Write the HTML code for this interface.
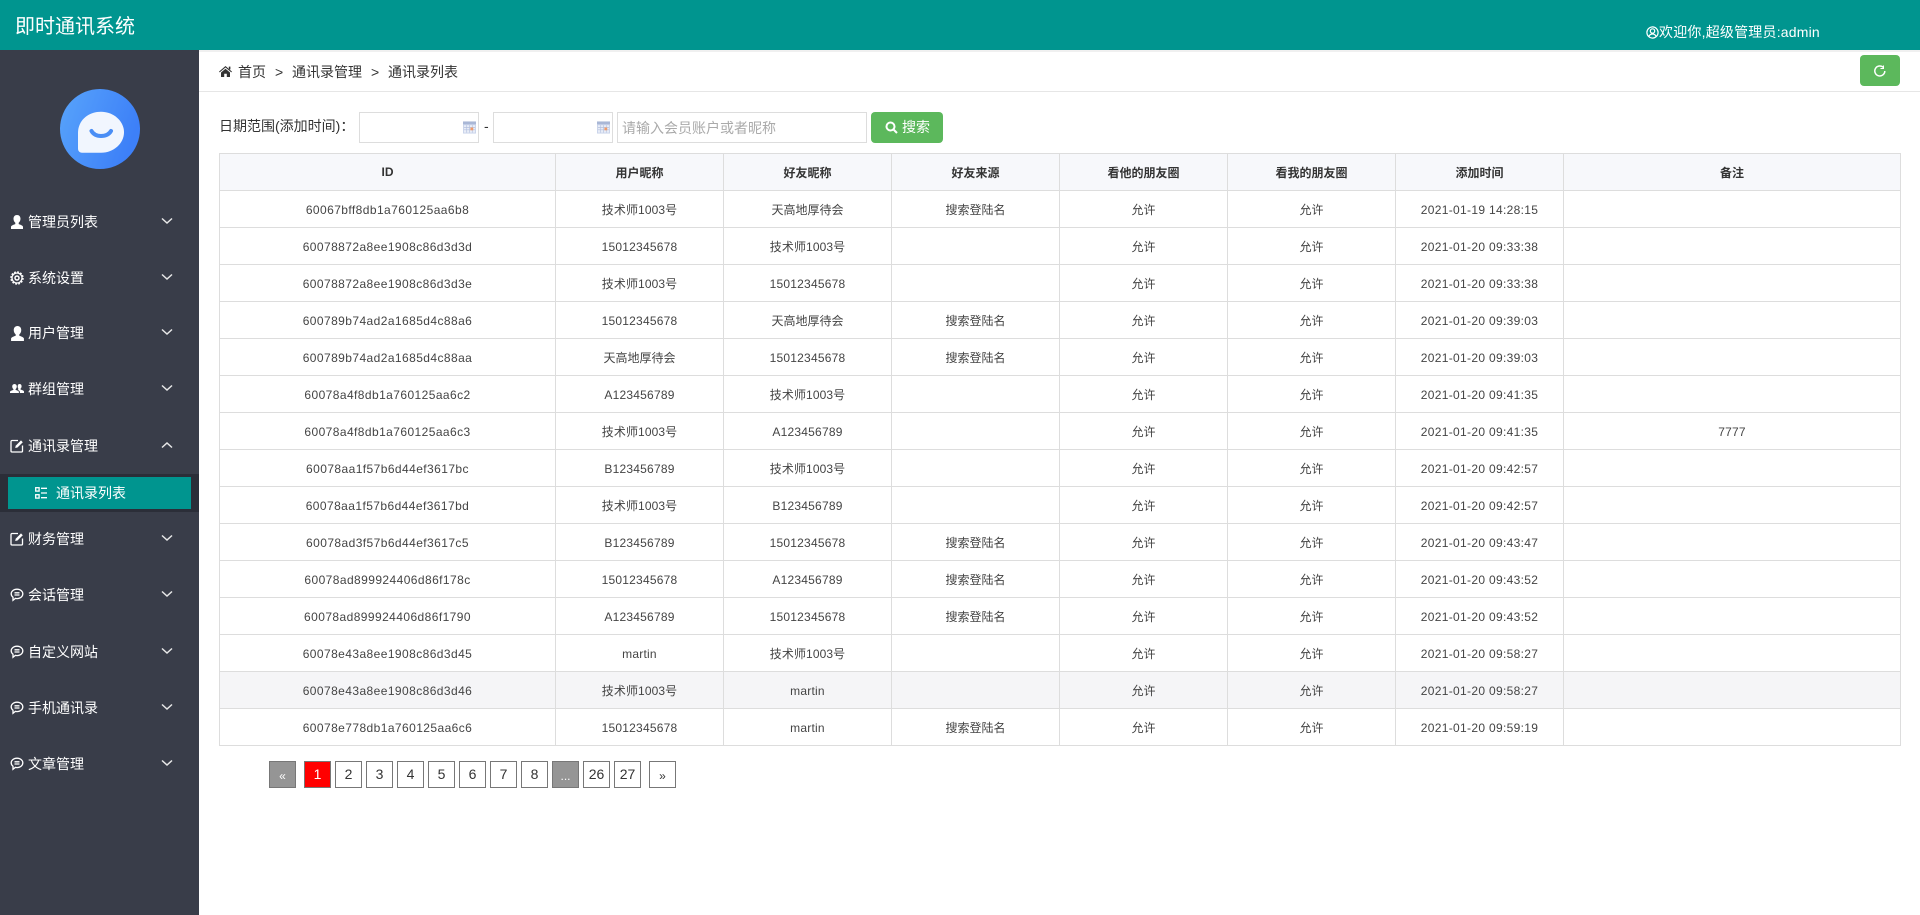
<!DOCTYPE html>
<html lang="zh-CN">
<head>
<meta charset="utf-8">
<title>即时通讯系统</title>
<style>
*{box-sizing:border-box;margin:0;padding:0}
html,body{width:1920px;height:915px;overflow:hidden;background:#fff}
body{position:relative;font-family:"Liberation Sans","Noto Sans CJK SC",sans-serif;font-size:12px;color:#333}
.a{position:absolute;white-space:nowrap}
#hd{left:0;top:0;width:1920px;height:50px;background:#00958f}
#title{left:15px;top:13px;font-size:20px;line-height:28px;color:#fff}
#wel{left:1646px;top:22px;font-size:14px;line-height:20px;color:#fff;letter-spacing:.2px}
#wel svg{vertical-align:-2px}
#gap{left:199px;top:50px;width:1721px;height:2px;background:#f0f0f0}
#sb{left:0;top:50px;width:199px;height:865px;background:#393d49}
.m{left:0;width:199px;height:20px;line-height:20px;font-size:14px;color:#fff}
.m .t{position:absolute;left:28px;top:0}
.m svg.i{position:absolute;left:10px;top:3px}
.m svg.c{position:absolute;left:161px;top:3px}
#subbg{left:0;top:474px;width:199px;height:38px;background:#2b2e38}
#sub{left:8px;top:477px;width:183px;height:32px;background:#00958f;color:#fff;font-size:14px;line-height:32px}
#sub span{position:absolute;left:48px;top:0}
#sub svg{position:absolute;left:27px;top:10px}
#bc{left:199px;top:52px;width:1721px;height:40px;border-bottom:1px solid #e6e6e6}
.bt{top:62px;font-size:14px;line-height:20px;color:#333}
#rf{left:1860px;top:55px;width:40px;height:31px;background:#5cb85c;border-radius:4px}
.lab{left:219px;top:116px;font-size:14px;line-height:20px;color:#333}
.inp{top:112px;height:31px;border:1px solid #ddd;background:#fff}
.ph{left:622px;top:118px;font-size:14px;line-height:20px;color:#aaa}
#btn{left:871px;top:112px;width:72px;height:31px;background:#5cb85c;border-radius:4px;color:#fff;font-size:14px;line-height:31px}
#btn span{position:absolute;left:31px;top:0}
#btn svg{position:absolute;left:14px;top:9px}
table{position:absolute;left:219px;top:153px;width:1681px;border-collapse:collapse;table-layout:fixed}
th,td{border:1px solid #ddd;height:37px;padding:0;text-align:center;font-size:12px;color:#444;white-space:nowrap;font-weight:normal}
th{background:#f7f8fb;font-weight:bold;color:#333}
td.n{letter-spacing:.42px;padding-top:1px}
td.d{letter-spacing:.32px;padding-top:1px}
td.s{letter-spacing:.22px;padding-top:1px}
td.x{letter-spacing:.1px}
tr.h td{background:#f5f5f7}
.p{top:761px;width:27px;height:27px;border:1px solid #777;text-align:center;font-size:14px;line-height:25px;color:#333;background:#fff}
.p.g{background:#959595;color:#fff;font-size:12px;line-height:28px}
.p.r{background:#f00;color:#fff;border-color:#777}
.p.q{font-size:12px;line-height:28px}
</style>
</head>
<body>
<div class="a" id="hd"></div>
<div class="a" id="title">即时通讯系统</div>
<div class="a" id="wel"><svg width="13" height="13" viewBox="0 0 13 13" fill="none" stroke="#fff" stroke-width="1.2"><circle cx="6.5" cy="6.5" r="5.6"/><circle cx="6.5" cy="5" r="2.2"/><path d="M2.8 10.600c.8-1.800 2.100-2.600 3.700-2.600s2.900.8 3.700 2.600"/></svg>欢迎你,超级管理员:admin</div>
<div class="a" id="gap"></div>

<div class="a" id="sb"></div>
<svg class="a" style="left:60px;top:89px" width="80" height="80" viewBox="0 0 80 80">
<defs><linearGradient id="lg" x1="0" y1="0" x2="1" y2=".35"><stop offset="0" stop-color="#58a4fb"/><stop offset="1" stop-color="#3d80f8"/></linearGradient></defs>
<circle cx="40" cy="40" r="40" fill="url(#lg)"/>
<path d="M18 44C18 31 28.500 22.700 41 22.700C53.500 22.700 64 32 64 43.200C64 54.500 53.500 63.700 41 63.700H22C19.500 63.700 18 62 18 59.500Z" fill="#f1f6fe"/>
<path d="M31.500 42c2 3.500 5.500 5 9.500 5s8-1.500 10-5" fill="none" stroke="#4a8ef5" stroke-width="4" stroke-linecap="round"/>
</svg>

<div class="a m" style="top:212px"><svg class="i" width="14" height="14" viewBox="0 0 14 14" fill="#fff"><path d="M7 0c2.300 0 3.500 1.700 3.500 3.800 0 1.700-.8 3.200-1.800 4v1.300c1.800.7 4 1.300 4.300 2.600V14H1v-2.300c.3-1.300 2.500-1.900 4.300-2.600V7.800c-1-.8-1.800-2.300-1.800-4C3.500 1.700 4.700 0 7 0z"/></svg><span class="t">管理员列表</span><svg class="c" width="12" height="12" viewBox="0 0 12 12" fill="none" stroke="#e8e8e8" stroke-width="1.500"><path d="M1 3.500l5 4.500 5-4.500"/></svg></div>

<div class="a m" style="top:268px"><svg class="i" width="14" height="14" viewBox="0 0 14 14" fill="none" stroke="#fff"><circle cx="7" cy="7" r="2" stroke-width="1.500"/><circle cx="7" cy="7" r="5" stroke-width="1.300"/><circle cx="7" cy="7" r="6" stroke-width="1.500" stroke-dasharray="1.800 1.340"/></svg><span class="t">系统设置</span><svg class="c" width="12" height="12" viewBox="0 0 12 12" fill="none" stroke="#e8e8e8" stroke-width="1.500"><path d="M1 3.500l5 4.500 5-4.500"/></svg></div>

<div class="a m" style="top:323px"><svg class="i" width="15" height="15" viewBox="0 0 14 14" fill="#fff"><path d="M7 0c2.300 0 3.500 1.700 3.500 3.800 0 1.700-.8 3.200-1.800 4v1.300c1.800.7 4 1.300 4.300 2.600V14H1v-2.300c.3-1.300 2.500-1.900 4.300-2.600V7.800c-1-.8-1.800-2.300-1.800-4C3.500 1.700 4.700 0 7 0z"/></svg><span class="t">用户管理</span><svg class="c" width="12" height="12" viewBox="0 0 12 12" fill="none" stroke="#e8e8e8" stroke-width="1.500"><path d="M1 3.500l5 4.500 5-4.500"/></svg></div>

<div class="a m" style="top:379px"><svg class="i" style="top:4px" width="14" height="11" viewBox="0 0 14 11" fill="#fff"><path d="M4.500 1c1.500 0 2.300 1.100 2.300 2.500 0 1.100-.5 2.100-1.200 2.600v.8c1.500.5 3.100 1 3.300 2V10H0V8.900c.2-1 1.900-1.500 3.400-2v-.8c-.7-.5-1.200-1.500-1.200-2.600C2.200 2.100 3 1 4.500 1z"/><path d="M9.500 1c1.400 0 2.100 1 2.100 2.300 0 1-.4 1.900-1.100 2.400v.8c1.200.4 3.100.9 3.500 1.900V10H9.900V8.800c-.3-.9-1.100-1.500-2-1.900.4-.4.500-.7.500-1.100-.4-.6-.7-1.400-.7-2.300 0-.9.300-1.700.8-2.200.3-.2.600-.3 1-.3z"/></svg><span class="t">群组管理</span><svg class="c" width="12" height="12" viewBox="0 0 12 12" fill="none" stroke="#e8e8e8" stroke-width="1.500"><path d="M1 3.500l5 4.500 5-4.500"/></svg></div>

<div class="a m" style="top:436px"><svg class="i" width="14" height="14" viewBox="0 0 14 14" fill="none" stroke="#fff" stroke-width="1.300"><path d="M8 1.500H2a1 1 0 0 0-1 1v9.500a1 1 0 0 0 1 1h9.500a1 1 0 0 0 1-1V6.500"/><path d="M5.200 9l.5-2.300L11 1.400l1.800 1.800L7.500 8.500z" fill="#fff" stroke="none"/></svg><span class="t">通讯录管理</span><svg class="c" width="12" height="12" viewBox="0 0 12 12" fill="none" stroke="#e8e8e8" stroke-width="1.500"><path d="M1 8.500l5-4.500 5 4.500"/></svg></div>

<div class="a" id="subbg"></div>
<div class="a" id="sub"><svg width="12" height="12" viewBox="0 0 12 12" fill="none" stroke="#fff" stroke-width="1.300"><rect x=".7" y=".7" width="3.400" height="3.400"/><rect x=".7" y="7.700" width="3.400" height="3.400"/><path d="M6 1.300h6M6 6h6M6 10.700h6"/></svg><span>通讯录列表</span></div>

<div class="a m" style="top:529px"><svg class="i" width="14" height="14" viewBox="0 0 14 14" fill="none" stroke="#fff" stroke-width="1.300"><path d="M8 1.500H2a1 1 0 0 0-1 1v9.500a1 1 0 0 0 1 1h9.500a1 1 0 0 0 1-1V6.500"/><path d="M5.200 9l.5-2.300L11 1.400l1.800 1.800L7.500 8.500z" fill="#fff" stroke="none"/></svg><span class="t">财务管理</span><svg class="c" width="12" height="12" viewBox="0 0 12 12" fill="none" stroke="#e8e8e8" stroke-width="1.500"><path d="M1 3.500l5 4.500 5-4.500"/></svg></div>

<div class="a m" style="top:585px"><svg class="i" width="14" height="14" viewBox="0 0 14 14" fill="none" stroke="#fff" stroke-width="1.300"><path d="M7 1.200c3.200 0 5.800 2 5.800 4.700S10.200 10.600 7 10.600c-.6 0-1.100 0-1.600-.2L3 12.300v-3C1.900 8.400 1.200 7.200 1.200 5.900 1.200 3.200 3.800 1.200 7 1.200z"/><path d="M4.500 4.800h5M4.500 7h5"/></svg><span class="t">会话管理</span><svg class="c" width="12" height="12" viewBox="0 0 12 12" fill="none" stroke="#e8e8e8" stroke-width="1.500"><path d="M1 3.500l5 4.500 5-4.500"/></svg></div>

<div class="a m" style="top:642px"><svg class="i" width="14" height="14" viewBox="0 0 14 14" fill="none" stroke="#fff" stroke-width="1.300"><path d="M7 1.200c3.200 0 5.800 2 5.800 4.700S10.200 10.600 7 10.600c-.6 0-1.100 0-1.600-.2L3 12.300v-3C1.900 8.400 1.200 7.200 1.200 5.900 1.200 3.200 3.800 1.200 7 1.200z"/><path d="M4.500 4.800h5M4.500 7h5"/></svg><span class="t">自定义网站</span><svg class="c" width="12" height="12" viewBox="0 0 12 12" fill="none" stroke="#e8e8e8" stroke-width="1.500"><path d="M1 3.500l5 4.500 5-4.500"/></svg></div>

<div class="a m" style="top:698px"><svg class="i" width="14" height="14" viewBox="0 0 14 14" fill="none" stroke="#fff" stroke-width="1.300"><path d="M7 1.200c3.200 0 5.800 2 5.800 4.700S10.200 10.600 7 10.600c-.6 0-1.100 0-1.600-.2L3 12.300v-3C1.900 8.400 1.200 7.200 1.200 5.900 1.200 3.200 3.800 1.200 7 1.200z"/><path d="M4.500 4.800h5M4.500 7h5"/></svg><span class="t">手机通讯录</span><svg class="c" width="12" height="12" viewBox="0 0 12 12" fill="none" stroke="#e8e8e8" stroke-width="1.500"><path d="M1 3.500l5 4.500 5-4.500"/></svg></div>

<div class="a m" style="top:754px"><svg class="i" width="14" height="14" viewBox="0 0 14 14" fill="none" stroke="#fff" stroke-width="1.300"><path d="M7 1.200c3.200 0 5.800 2 5.800 4.700S10.200 10.600 7 10.600c-.6 0-1.100 0-1.600-.2L3 12.300v-3C1.900 8.400 1.200 7.200 1.200 5.900 1.200 3.200 3.800 1.200 7 1.200z"/><path d="M4.500 4.800h5M4.500 7h5"/></svg><span class="t">文章管理</span><svg class="c" width="12" height="12" viewBox="0 0 12 12" fill="none" stroke="#e8e8e8" stroke-width="1.500"><path d="M1 3.500l5 4.500 5-4.500"/></svg></div>

<div class="a" id="bc"></div>
<svg class="a" style="left:219px;top:66px" width="13" height="11" viewBox="0 0 13 11" fill="#333"><path d="M6.500 0L13 5.600l-.7.8L6.500 1.500.7 6.400 0 5.600z"/><path d="M2 6.500l4.500-3.800L11 6.500V11H7.800V7.800H5.200V11H2z"/><rect x="9.800" y=".6" width="1.600" height="2.800"/></svg>
<div class="a bt" style="left:238px">首页</div>
<div class="a bt" style="left:275px">&gt;</div>
<div class="a bt" style="left:292px">通讯录管理</div>
<div class="a bt" style="left:371px">&gt;</div>
<div class="a bt" style="left:388px">通讯录列表</div>
<div class="a" id="rf"><svg style="position:absolute;left:13px;top:9px" width="14" height="14" viewBox="0 0 14 14" fill="none" stroke="#fff" stroke-width="1.500"><path d="M11.800 7a5 5 0 1 1-1.500-3.600"/><path d="M10.500 1.500v3h-3" stroke-width="1"/></svg></div>

<div class="a lab">日期范围(添加时间)：</div>
<div class="a inp" style="left:359px;width:120px"></div>
<svg class="a" style="left:463px;top:121px" width="13" height="13" viewBox="0 0 14 13"><rect width="14" height="13" fill="#c9d3ea"/><rect width="14" height="3" fill="#a9b7d6"/><rect x="1" y="4" width="12" height="8" fill="#e8edf7"/><path d="M1 6.500h12M1 9h12M4 4v8M7 4v8M10 4v8" stroke="#b4c0de" stroke-width=".7"/><rect x="8" y="6.500" width="3" height="3" fill="#ef9a6a"/></svg>
<div class="a" style="left:484px;top:116px;font-size:14px;line-height:20px">-</div>
<div class="a inp" style="left:493px;width:120px"></div>
<svg class="a" style="left:597px;top:121px" width="13" height="13" viewBox="0 0 14 13"><rect width="14" height="13" fill="#c9d3ea"/><rect width="14" height="3" fill="#a9b7d6"/><rect x="1" y="4" width="12" height="8" fill="#e8edf7"/><path d="M1 6.500h12M1 9h12M4 4v8M7 4v8M10 4v8" stroke="#b4c0de" stroke-width=".7"/><rect x="8" y="6.500" width="3" height="3" fill="#ef9a6a"/></svg>
<div class="a inp" style="left:617px;width:250px"></div>
<div class="a ph">请输入会员账户或者昵称</div>
<div class="a" id="btn"><svg width="13" height="13" viewBox="0 0 13 13" fill="none" stroke="#fff" stroke-width="2"><circle cx="5.500" cy="5.500" r="4"/><path d="M8.500 8.500l3.500 3.500"/></svg><span>搜索</span></div>

<table>
<colgroup><col style="width:336px"><col style="width:168px"><col style="width:168px"><col style="width:168px"><col style="width:168px"><col style="width:168px"><col style="width:168px"><col style="width:337px"></colgroup>
<tr><th>ID</th><th>用户昵称</th><th>好友昵称</th><th>好友来源</th><th>看他的朋友圈</th><th>看我的朋友圈</th><th>添加时间</th><th>备注</th></tr>
<tr><td class="n">60067bff8db1a760125aa6b8</td><td class="x">技术师1003号</td><td>天高地厚待会</td><td>搜索登陆名</td><td>允许</td><td>允许</td><td class="d">2021-01-19 14:28:15</td><td></td></tr>
<tr><td class="n">60078872a8ee1908c86d3d3d</td><td class="s">15012345678</td><td class="x">技术师1003号</td><td></td><td>允许</td><td>允许</td><td class="d">2021-01-20 09:33:38</td><td></td></tr>
<tr><td class="n">60078872a8ee1908c86d3d3e</td><td class="x">技术师1003号</td><td class="s">15012345678</td><td></td><td>允许</td><td>允许</td><td class="d">2021-01-20 09:33:38</td><td></td></tr>
<tr><td class="n">600789b74ad2a1685d4c88a6</td><td class="s">15012345678</td><td>天高地厚待会</td><td>搜索登陆名</td><td>允许</td><td>允许</td><td class="d">2021-01-20 09:39:03</td><td></td></tr>
<tr><td class="n">600789b74ad2a1685d4c88aa</td><td>天高地厚待会</td><td class="s">15012345678</td><td>搜索登陆名</td><td>允许</td><td>允许</td><td class="d">2021-01-20 09:39:03</td><td></td></tr>
<tr><td class="n">60078a4f8db1a760125aa6c2</td><td class="s">A123456789</td><td class="x">技术师1003号</td><td></td><td>允许</td><td>允许</td><td class="d">2021-01-20 09:41:35</td><td></td></tr>
<tr><td class="n">60078a4f8db1a760125aa6c3</td><td class="x">技术师1003号</td><td class="s">A123456789</td><td></td><td>允许</td><td>允许</td><td class="d">2021-01-20 09:41:35</td><td class="s">7777</td></tr>
<tr><td class="n">60078aa1f57b6d44ef3617bc</td><td class="s">B123456789</td><td class="x">技术师1003号</td><td></td><td>允许</td><td>允许</td><td class="d">2021-01-20 09:42:57</td><td></td></tr>
<tr><td class="n">60078aa1f57b6d44ef3617bd</td><td class="x">技术师1003号</td><td class="s">B123456789</td><td></td><td>允许</td><td>允许</td><td class="d">2021-01-20 09:42:57</td><td></td></tr>
<tr><td class="n">60078ad3f57b6d44ef3617c5</td><td class="s">B123456789</td><td class="s">15012345678</td><td>搜索登陆名</td><td>允许</td><td>允许</td><td class="d">2021-01-20 09:43:47</td><td></td></tr>
<tr><td class="n">60078ad899924406d86f178c</td><td class="s">15012345678</td><td class="s">A123456789</td><td>搜索登陆名</td><td>允许</td><td>允许</td><td class="d">2021-01-20 09:43:52</td><td></td></tr>
<tr><td class="n">60078ad899924406d86f1790</td><td class="s">A123456789</td><td class="s">15012345678</td><td>搜索登陆名</td><td>允许</td><td>允许</td><td class="d">2021-01-20 09:43:52</td><td></td></tr>
<tr><td class="n">60078e43a8ee1908c86d3d45</td><td class="s">martin</td><td class="x">技术师1003号</td><td></td><td>允许</td><td>允许</td><td class="d">2021-01-20 09:58:27</td><td></td></tr>
<tr class="h"><td class="n">60078e43a8ee1908c86d3d46</td><td class="x">技术师1003号</td><td class="s">martin</td><td></td><td>允许</td><td>允许</td><td class="d">2021-01-20 09:58:27</td><td></td></tr>
<tr><td class="n">60078e778db1a760125aa6c6</td><td class="s">15012345678</td><td class="s">martin</td><td>搜索登陆名</td><td>允许</td><td>允许</td><td class="d">2021-01-20 09:59:19</td><td></td></tr>
</table>

<div class="a p g" style="left:269px">«</div>
<div class="a p r" style="left:304px">1</div>
<div class="a p" style="left:335px">2</div>
<div class="a p" style="left:366px">3</div>
<div class="a p" style="left:397px">4</div>
<div class="a p" style="left:428px">5</div>
<div class="a p" style="left:459px">6</div>
<div class="a p" style="left:490px">7</div>
<div class="a p" style="left:521px">8</div>
<div class="a p g" style="left:552px">...</div>
<div class="a p" style="left:583px">26</div>
<div class="a p" style="left:614px">27</div>
<div class="a p q" style="left:649px">»</div>
</body>
</html>
